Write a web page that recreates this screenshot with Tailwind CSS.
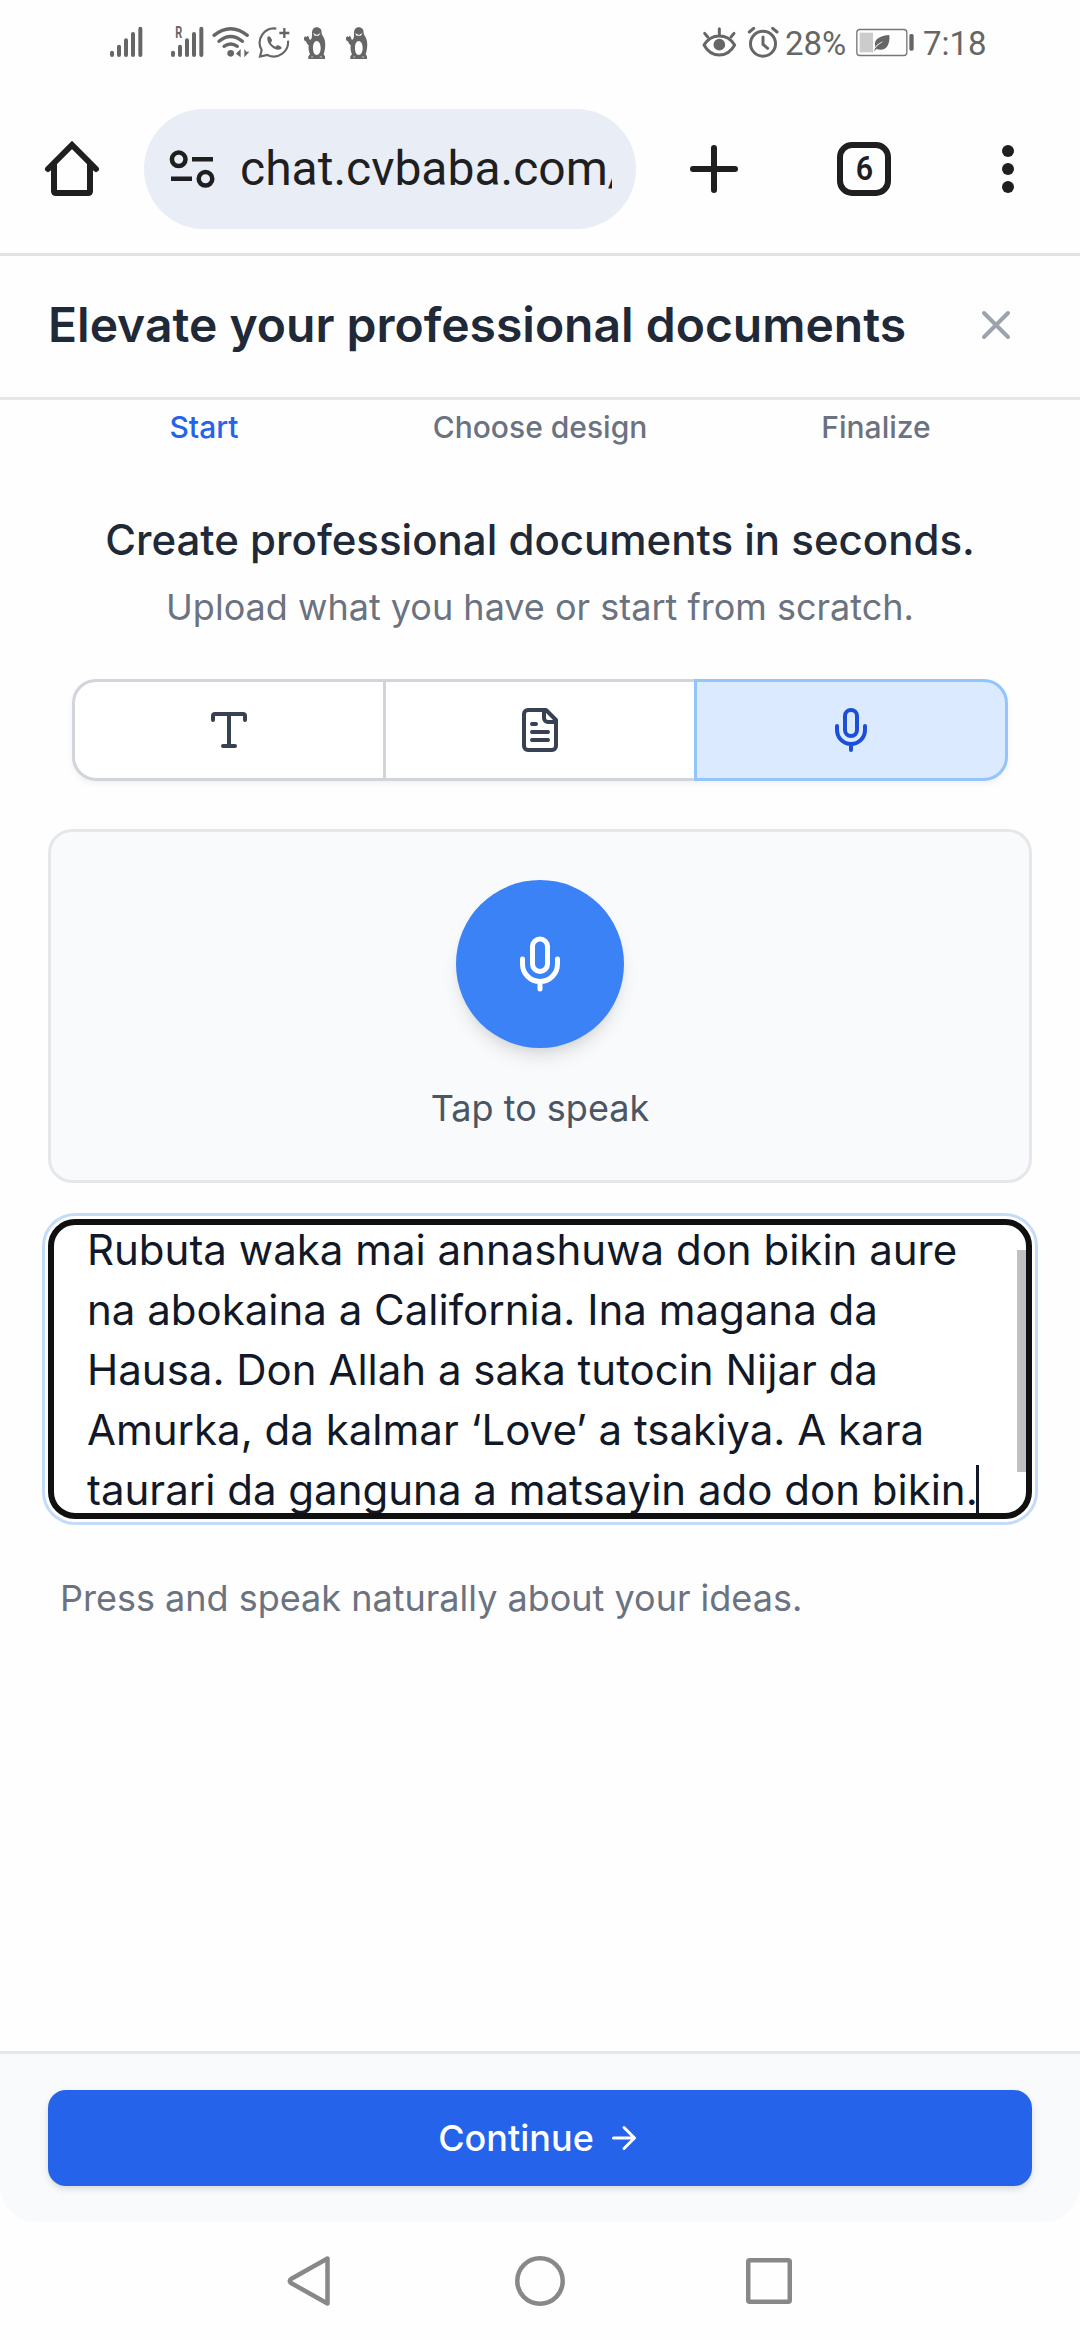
<!DOCTYPE html>
<html lang="ha">
<head>
<meta charset="utf-8">
<title>Elevate your professional documents</title>
<script src="https://cdn.jsdelivr.net/npm/@tailwindcss/browser@4"></script>
</head>
<body class="bg-[#fefefe] font-['Inter',sans-serif]">
<div class="flex h-[2340px] w-[1080px] flex-col overflow-hidden">

  <!-- System status bar -->
  <div class="flex h-[84px] shrink-0 pl-[107px] pr-[93px] font-['Roboto',sans-serif] text-[33px] text-[#666]">
    <svg class="mt-[10px] h-[70px] w-[40px]" viewBox="51 0 120 210" fill="none" stroke="#666" stroke-width="12" stroke-linecap="round"><path d="M66 128v7M87 110v25M108 91v44M129 72v63M151 56v79"/></svg>
    <svg class="ml-5 mt-[10px] h-[70px] w-[40px]" viewBox="231 0 120 210" fill="none" stroke="#666" stroke-width="12" stroke-linecap="round"><path d="M249 128v7M270 110v25M291 91v44M312 72v63M334 56v79"/><text x="256" y="84" font-family="Roboto" font-weight="700" font-size="49" textLength="21" lengthAdjust="spacingAndGlyphs" fill="#666" stroke="none">R</text></svg>
    <svg class="ml-[3px] mt-[10px] h-[70px] w-[42px]" viewBox="360 0 126 210" fill="none" stroke="#666" stroke-width="10" stroke-linecap="round"><path d="M372 76Q422 36 472 76M387 94Q422 65 457 94M402 109Q422 95 442 109"/><circle cx="422" cy="130" r="10" fill="#666" stroke="none"/><path d="M438 131l14-14v25zM463 117v25l15-17h-9z" fill="#666" stroke="none"/></svg>
    <svg class="ml-[5px] mt-[10px] h-[70px] w-[35px]" viewBox="501 0 105 210" fill="none" stroke="#666" stroke-width="6.5"><path d="M559 56A43 43 0 0 0 515 120L510 140L532 135A43 43 0 0 0 594 92"/><path d="M583 54v30M568 69h30" stroke-width="7"/><path d="M532 82q6-8 11 2l3 6q1 4-4 8q5 8 14 12q5-6 9-4l8 4q5 4-2 8c-14 7-42-14-39-36z" fill="#666" stroke="none"/></svg>
    <svg class="ml-[9px] mt-[10px] h-[70px] w-[28px]" viewBox="633 0 84 210" fill="#666"><path id="peng" fill-rule="evenodd" d="M680 52c10 0 15 7 15 16c0 8 8 12 10 26c2 14 0 27-4 39l4 6v8h-50v-8l5-6c-4-8-5-17-4-27c-4-3-6-7-8-12c-5-1-7-6-6-11l3-4l5 2l3-4l4 5l1 6l4 1l3-5c1-2 1-9 1-14c0-11 5-18 14-18zM680 93c-7 0-11 9-11 22s5 20 11 20s12-7 12-20s-5-22-12-22zM669 69l5 8h12l6-8l-6 3l-5 3l-6-3z"/><path d="M662 142q4-5 9 0zM688 142q5-5 10 0z" fill="#fff"/></svg>
    <svg class="ml-[14px] mt-[10px] h-[70px] w-[28px]" viewBox="633 0 84 210" fill="#666"><use href="#peng"/><path d="M662 142q4-5 9 0zM688 142q5-5 10 0z" fill="#fff"/></svg>

    <svg class="ml-auto mt-[10px] h-[70px] w-[39px]" viewBox="30 0 117 210" fill="none" stroke="#666" stroke-width="9" stroke-linecap="round"><path d="M42 105C64 69 112 69 134 105C112 145 64 145 42 105z" stroke-linejoin="round"/><circle cx="88" cy="104" r="17.500" fill="#666" stroke="none"/><path d="M88 56v16M44 70l9 11M132 70l-9 11"/></svg>
    <svg class="ml-[7px] mt-[10px] h-[70px] w-[34px]" viewBox="168 0 102 210" fill="none" stroke="#666" stroke-width="9" stroke-linecap="round"><circle cx="219" cy="101" r="37.500"/><path d="M219 81v22l14 12M178 66l13-11M248 55l13 11"/></svg>
    <span class="ml-[5px] h-[87px] w-[61px] whitespace-nowrap leading-[87px]">28%</span>
    <svg class="ml-[9px] mt-[10px] h-[70px] w-[60px]" viewBox="495 0 180 210"><rect x="500.500" y="58.500" width="150" height="78" rx="9" fill="none" stroke="#777" stroke-width="4"/><path d="M509 68h40v59h-40z" fill="#ccc"/><rect x="658" y="72" width="13" height="50" rx="5" fill="#666"/><path d="M598 75C601 107 586 126 559 117L554 123L553 120C560 106 570 101 582 94C568 98 560 104 556 112C549 86 571 77 598 75z" fill="#666"/></svg>
    <span class="ml-2 h-[87px] w-[64px] whitespace-nowrap leading-[87px]">7:18</span>
  </div>

  <!-- Browser toolbar -->
  <div class="flex h-[172px] shrink-0 items-center border-b-3 border-[#dde3e7] pl-[42px] text-[#1f1f1f]">
    <svg class="size-[60px]" viewBox="0 0 60 60" fill="none" stroke="#1f1f1f" stroke-width="6" stroke-linecap="round"><path d="M6 30L30 6L54 30"/><path d="M12 26v26q0 2 2 2h32q2 0 2-2V26"/></svg>
    <div class="ml-[42px] flex h-[120px] w-[492px] items-center rounded-full bg-[#e8edf6] pl-6">
      <svg class="size-[48px] shrink-0" viewBox="0 0 48 48" fill="none" stroke="#1f1f1f" stroke-width="4.500"><circle cx="10.700" cy="14.300" r="6.800"/><path d="M24 14.300h21M3 33.800h21"/><circle cx="37.500" cy="33.800" r="6.800"/></svg>
      <div class="ml-6 w-[372px] overflow-hidden whitespace-nowrap font-['Roboto',sans-serif] text-[48px] leading-[57px]">chat.cvbaba.com/</div>
    </div>
    <svg class="ml-[54px] size-[48px]" viewBox="0 0 48 48" stroke="#1f1f1f" stroke-width="6" stroke-linecap="round"><path d="M24 3v42M3 24h42"/></svg>
    <div class="ml-[99px] flex size-[54px] items-center justify-center rounded-[15px] border-6 border-[#1f1f1f] font-['Roboto',sans-serif] text-[33px] font-semibold leading-[42px]"><span class="scale-x-92">6</span></div>
    <svg class="ml-[111px] h-[48px] w-[12px]" viewBox="0 0 12 48" fill="#1f1f1f"><circle cx="6" cy="6" r="6"/><circle cx="6" cy="24" r="6"/><circle cx="6" cy="42" r="6"/></svg>
  </div>

  <!-- Dialog header -->
  <header class="flex h-[144px] shrink-0 items-center justify-between border-b-3 border-gray-200 px-12 pb-1">
    <h1 class="text-[48px] font-semibold leading-[60px] text-[#1f2937]">Elevate your professional documents</h1>
    <svg class="mr-3 size-12" viewBox="0 0 24 24" fill="none" stroke="#9ca3af" stroke-width="2" stroke-linecap="round"><path d="M18 6L6 18M6 6l12 12"/></svg>
  </header>

  <main class="flex grow flex-col px-12 pt-[7px]">
    <div class="-mx-3 grid grid-cols-3 text-center text-[30px] font-medium leading-10 text-[#6b7280]">
      <span class="text-[#2563eb]">Start</span>
      <span>Choose design</span>
      <span>Finalize</span>
    </div>

    <h2 class="mt-[63px] text-center text-[42px] font-medium leading-[60px] text-[#1f2937]">Create professional documents in seconds.</h2>
    <p class="mt-[10px] text-center text-[36px] leading-[54px] text-[#6b7280]">Upload what you have or start from scratch.</p>

    <!-- Input mode switch -->
    <div class="mx-6 mt-[45px] flex h-[102px] rounded-[24px] shadow-[0_3px_6px_rgb(0_0_0/0.05)]">
      <div class="flex w-[314px] items-center justify-center rounded-l-[24px] border-3 border-[#d1d5db] bg-white">
        <svg class="size-12" viewBox="0 0 24 24" fill="none" stroke="#374151" stroke-width="2" stroke-linecap="round" stroke-linejoin="round"><path d="M12 4v16M4 7V5a1 1 0 0 1 1-1h14a1 1 0 0 1 1 1v2M9 20h6"/></svg>
      </div>
      <div class="-ml-[3px] flex w-[314px] items-center justify-center border-3 border-[#d1d5db] bg-white">
        <svg class="size-12" viewBox="0 0 24 24" fill="none" stroke="#374151" stroke-width="2" stroke-linecap="round" stroke-linejoin="round"><path d="M15 2H6a2 2 0 0 0-2 2v16a2 2 0 0 0 2 2h12a2 2 0 0 0 2-2V7Z"/><path d="M14 2v4a2 2 0 0 0 2 2h4M10 9H8M16 13H8M16 17H8"/></svg>
      </div>
      <div class="z-10 -ml-[3px] flex w-[314px] items-center justify-center rounded-r-[24px] border-3 border-[#93c5fd] bg-[#dbeafe]">
        <svg class="size-12" viewBox="0 0 24 24" fill="none" stroke="#1d4ed8" stroke-width="2" stroke-linecap="round" stroke-linejoin="round"><path d="M12 2a3 3 0 0 0-3 3v7a3 3 0 0 0 6 0V5a3 3 0 0 0-3-3Z"/><path d="M19 10v2a7 7 0 0 1-14 0v-2M12 19v3"/></svg>
      </div>
    </div>

    <!-- Voice recorder -->
    <section class="mt-12 flex h-[354px] flex-col items-center rounded-[24px] border-3 border-gray-200 bg-[#f9fafc] pt-12">
      <div class="flex size-[168px] items-center justify-center rounded-full bg-[#3b82f6] shadow-[0_12px_18px_-3px_rgb(0_0_0/0.1),0_6px_12px_-6px_rgb(0_0_0/0.1)]">
        <svg class="size-[60px]" viewBox="0 0 24 24" fill="none" stroke="#fff" stroke-width="2" stroke-linecap="round" stroke-linejoin="round"><path d="M12 2a3 3 0 0 0-3 3v7a3 3 0 0 0 6 0V5a3 3 0 0 0-3-3Z"/><path d="M19 10v2a7 7 0 0 1-14 0v-2M12 19v3"/></svg>
      </div>
      <p class="mt-9 text-[36px] leading-[48px] text-[#4b5563]">Tap to speak</p>
    </section>

    <!-- Transcript field, scrolled to its last line -->
    <div class="relative mt-9 h-[300px] shrink-0 overflow-hidden rounded-[27px] border-6 border-[#101010] bg-white pl-[33px] shadow-[0_0_0_3px_#fff,0_0_0_6px_#c3daf8]">
      <p class="-mt-[5px] whitespace-nowrap text-[42px] leading-[60px] text-[#111827]">Rubuta waka mai annashuwa don bikin aure<br>na abokaina a California. Ina magana da<br>Hausa. Don Allah a saka tutocin Nijar da<br>Amurka, da kalmar ‘Love’ a tsakiya. A kara<br>taurari da ganguna a matsayin ado don bikin.</p>
      <div class="absolute left-[922px] top-[240px] h-[48px] w-[3px] bg-[#111827]"></div>
      <div class="absolute right-0 top-[25px] h-[222px] w-[9px] bg-[#c0c0c0]"></div>
    </div>

    <p class="mt-[55px] pl-3 text-[36px] leading-[48px] text-[#6b7280]">Press and speak naturally about your ideas.</p>
  </main>

  <footer class="h-[171px] shrink-0 rounded-b-[36px] border-t-3 border-gray-200 bg-[#f9fafc] px-12 pt-9">
    <div class="flex h-24 items-center justify-center gap-3 rounded-[18px] bg-[#2563eb] text-[36px] font-medium leading-[48px] text-white shadow-[0_3px_9px_rgb(0_0_0/0.1),0_3px_6px_-3px_rgb(0_0_0/0.1)]">
      Continue
      <svg class="size-9" viewBox="0 0 24 24" fill="none" stroke="#fff" stroke-width="2" stroke-linecap="round" stroke-linejoin="round"><path d="M5 12h14M12 5l7 7-7 7"/></svg>
    </div>
  </footer>

  <!-- System navigation -->
  <nav class="flex h-[118px] shrink-0 items-center pl-[282px]">
    <svg class="size-[54px]" viewBox="0 0 54 54" fill="none" stroke="#888" stroke-width="4.500" stroke-linejoin="round"><path d="M45.500 4.500v45L9 29q-2.500-2 0-4z"/></svg>
    <svg class="ml-[177px] size-[54px]" viewBox="0 0 54 54" fill="none" stroke="#888" stroke-width="4.500"><circle cx="27" cy="27" r="22.700"/></svg>
    <svg class="ml-[175px] size-[54px]" viewBox="0 0 54 54" fill="none" stroke="#888" stroke-width="4.500"><rect x="6.250" y="6.250" width="41.500" height="41.500" rx="1.500"/></svg>
  </nav>
</div>
</body>
</html>
